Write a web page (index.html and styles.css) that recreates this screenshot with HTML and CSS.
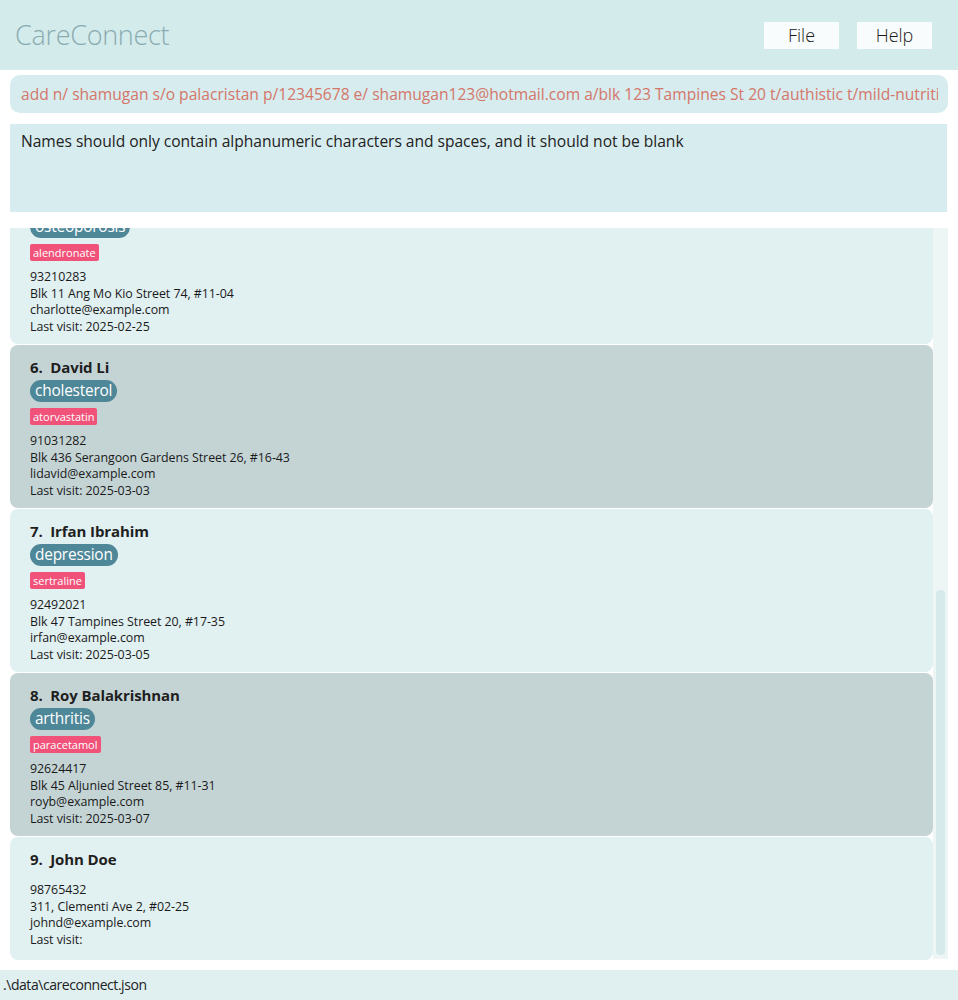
FILE: index.html
```html
<!DOCTYPE html>
<html>
<head>
<meta charset="utf-8">
<title>CareConnect</title>
<link rel="stylesheet" href="styles.css">
</head>
<body>
<div class="app">
  <header class="header">
    <div class="title">CareConnect</div>
    <nav class="menu">
      <span class="menu-btn">File</span>
      <span class="menu-btn">Help</span>
    </nav>
  </header>
  <div class="command"><div class="command-text">add n/ shamugan s/o palacristan p/12345678 e/ shamugan123@hotmail.com a/blk 123 Tampines St 20 t/authistic t/mild-nutrition</div></div>
  <div class="result">Names should only contain alphanumeric characters and spaces, and it should not be blank</div>
  <div class="list-area">
    <div class="list">
      <div class="card light first">
        <div class="name">5.&nbsp; Charlotte Oliveiro</div>
        <div class="tags"><span class="cond">osteoporosis</span></div>
        <div class="meds"><span class="med">alendronate</span></div>
        <div class="details">
          <div>93210283</div>
          <div>Blk 11 Ang Mo Kio Street 74, #11-04</div>
          <div>charlotte@example.com</div>
          <div>Last visit: 2025-02-25</div>
        </div>
      </div>
      <div class="card dark">
        <div class="name">6.&nbsp; David Li</div>
        <div class="tags"><span class="cond">cholesterol</span></div>
        <div class="meds"><span class="med">atorvastatin</span></div>
        <div class="details">
          <div>91031282</div>
          <div>Blk 436 Serangoon Gardens Street 26, #16-43</div>
          <div>lidavid@example.com</div>
          <div>Last visit: 2025-03-03</div>
        </div>
      </div>
      <div class="card light">
        <div class="name">7.&nbsp; Irfan Ibrahim</div>
        <div class="tags"><span class="cond">depression</span></div>
        <div class="meds"><span class="med">sertraline</span></div>
        <div class="details">
          <div>92492021</div>
          <div>Blk 47 Tampines Street 20, #17-35</div>
          <div>irfan@example.com</div>
          <div>Last visit: 2025-03-05</div>
        </div>
      </div>
      <div class="card dark">
        <div class="name">8.&nbsp; Roy Balakrishnan</div>
        <div class="tags"><span class="cond">arthritis</span></div>
        <div class="meds"><span class="med">paracetamol</span></div>
        <div class="details">
          <div>92624417</div>
          <div>Blk 45 Aljunied Street 85, #11-31</div>
          <div>royb@example.com</div>
          <div>Last visit: 2025-03-07</div>
        </div>
      </div>
      <div class="card light">
        <div class="name">9.&nbsp; John Doe</div>
        <div class="details notags">
          <div>98765432</div>
          <div>311, Clementi Ave 2, #02-25</div>
          <div>johnd@example.com</div>
          <div>Last visit:</div>
        </div>
      </div>
    </div>
    <div class="scrollbar"><div class="thumb"></div></div>
  </div>
  <footer class="status">.\data\careconnect.json</footer>
</div>
</body>
</html>
```
FILE: styles.css
```css
* { box-sizing: border-box; }
html, body {
  margin: 0;
  padding: 0;
  background: #ffffff;
}
body {
  font-family: "Open Sans", "Noto Sans", "Liberation Sans", sans-serif;
  color: #1f1f1f;
}
.app {
  width: 958px;
  height: 1000px;
  display: flex;
  flex-direction: column;
  overflow: hidden;
}
.header {
  height: 70px;
  background: #d4ebec;
  display: flex;
  align-items: center;
  justify-content: space-between;
  padding: 0 26px 0 15px;
  flex: none;
}
.title {
  font-size: 27px;
  font-weight: 300;
  color: #8aacb0;
  letter-spacing: -0.3px;
  margin-top: -1px;
}
.menu {
  display: flex;
  gap: 18px;
}
.menu-btn {
  width: 75px;
  height: 27px;
  background: #f9fcfc;
  display: flex;
  align-items: center;
  justify-content: center;
  font-size: 18px;
  font-weight: 300;
  color: #1a1a1a;
}
.command {
  margin: 5px 10px 0 10px;
  height: 38px;
  flex: none;
  background: #d7ecee;
  border-radius: 10px;
  padding: 0 10px 0 11px;
}
.command-text {
  font-size: 15.6px;
  color: #d4766a;
  line-height: 38px;
  white-space: nowrap;
  overflow: hidden;
}
.result {
  margin: 11px 11px 0 10px;
  height: 88px;
  flex: none;
  background: #d7ecee;
  padding: 6px 11px;
  font-size: 15.6px;
  line-height: 22px;
  color: #222;
  letter-spacing: -0.03px;
}
.list-area {
  margin: 16px 10px 0 10px;
  height: 732px;
  flex: none;
  display: flex;
}
.list {
  width: 923px;
  height: 732px;
  overflow: hidden;
  display: flex;
  flex-direction: column;
  gap: 1px;
}
.card {
  flex: none;
  height: 163px;
  border-radius: 8px;
  padding: 12px 20px 0 20px;
}
.card.first { margin-top: -47px; }
.card:last-child { height: 123px; }
.light { background: #e1f0f1; }
.dark { background: #c4d4d5; }
.name {
  font-size: 15px;
  font-weight: 700;
  line-height: 20px;
  color: #1f1f1f;
  letter-spacing: -0.1px;
}
.tags {
  margin-top: 3px;
  display: flex;
}
.cond {
  display: inline-block;
  height: 22px;
  line-height: 21px;
  padding: 0 5px;
  border-radius: 11px;
  background: #4e8798;
  color: #fff;
  font-size: 15.4px;
  letter-spacing: -0.2px;
}
.meds {
  margin-top: 6px;
  display: flex;
}
.med {
  display: inline-block;
  height: 17px;
  line-height: 17px;
  padding: 0 3px;
  border-radius: 2px;
  background: #f0527a;
  color: #fff;
  font-size: 11px;
}
.details {
  margin-top: 8px;
  font-size: 12.4px;
  line-height: 16.5px;
  color: #1a1a1a;
  letter-spacing: -0.05px;
}
.details.notags { margin-top: 13px; }
.scrollbar {
  width: 15px;
  height: 731px;
  background: #eef5f5;
  position: relative;
}
.thumb {
  position: absolute;
  left: 3px;
  right: 3px;
  top: 362px;
  bottom: 4px;
  background: #d6eaec;
  border-radius: 4px;
}
.status {
  margin-top: 10px;
  height: 30px;
  flex: none;
  background: #e0f0f1;
  padding: 0 3px;
  font-size: 14px;
  line-height: 30px;
  color: #222;
  letter-spacing: -0.45px;
}
```
